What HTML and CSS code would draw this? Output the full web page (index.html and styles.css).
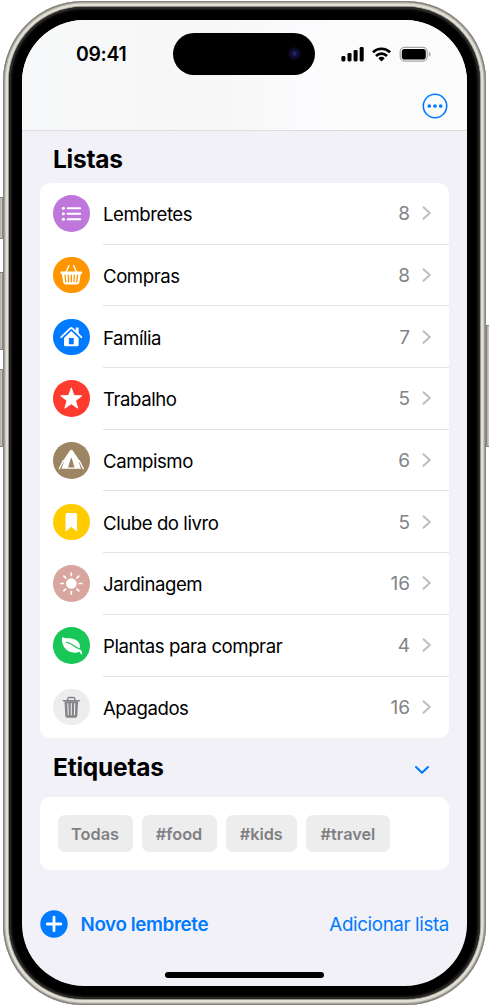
FILE: index.html
```html
<!DOCTYPE html>
<html lang="pt">
<head>
<meta charset="utf-8">
<title>Lembretes</title>
<link rel="stylesheet" href="styles.css">
</head>
<body>
<div class="stage">
  <span class="side-button action"></span>
  <span class="side-button volume-up"></span>
  <span class="side-button volume-down"></span>
  <span class="side-button power"></span>
  <div class="phone">
    <div class="bezel">
      <main class="screen">
        <header class="header">
          <div class="status">
            <span class="time">09:41</span>
            <div class="island"><span class="camera"></span></div>
            <svg class="status-icons" viewBox="0 0 92 18" width="92" height="18">
              <rect x="1.4" y="11" width="4" height="5.4" rx="1.3"/>
              <rect x="7.5" y="8" width="4" height="8.4" rx="1.3"/>
              <rect x="13.6" y="5" width="4" height="11.4" rx="1.3"/>
              <rect x="19.7" y="2" width="4" height="14.4" rx="1.3"/>
              <g fill="none" stroke="#000" stroke-width="2.7">
                <path d="M32.9 7.2a12.4 12.4 0 0 1 17.2 0"/>
                <path d="M36 10.9a8 8 0 0 1 11 0"/>
              </g>
              <path d="M38.3 13.3a4.8 4.8 0 0 1 6.4 0L41.5 16.6z"/>
              <rect x="60.2" y="2.4" width="27" height="13.7" rx="4.3" fill="none" stroke="#a7a7a7" stroke-width="1.2"/>
              <rect x="61.8" y="4" width="24" height="10.6" rx="2.8"/>
              <path d="M88.8 6.8c2.3.7 2.3 4.3 0 5z" fill="#a7a7a7"/>
            </svg>
          </div>
          <svg class="more" viewBox="0 0 26 26" width="26" height="26">
            <circle cx="13" cy="13" r="11.7" fill="none" stroke="#007aff" stroke-width="1.6"/>
            <g fill="#007aff"><circle cx="7.3" cy="13" r="1.85"/><circle cx="13" cy="13" r="1.85"/><circle cx="18.7" cy="13" r="1.85"/></g>
          </svg>
        </header>

        <h2 class="title lists-title">Listas</h2>
        <ul class="lists">
          <li class="row"><svg class="icon purple" viewBox="0 0 36 36"><g fill="#fff"><circle cx="10.2" cy="13" r="1.5"/><circle cx="10.2" cy="18.4" r="1.5"/><circle cx="10.2" cy="23.8" r="1.5"/></g><path d="M14.4 13h12.3M14.4 18.4h12.3M14.4 23.8h12.3" stroke="#fff" stroke-width="2" stroke-linecap="round"/></svg><div class="line"><span class="name">Lembretes</span><span class="count">8</span><svg class="chevron" viewBox="0 0 10 16"><path d="M1.5 2.200l6.300 5.800-6.300 5.800"/></svg></div></li>
          <li class="row"><svg class="icon orange" viewBox="0 0 36 36"><path d="M12.4 16l3.2-7.400M23.6 16l-3.2-7.400" stroke="#fff" stroke-width="1.4" stroke-linecap="round"/><path fill="#fff" d="M8.2 14.200h19.600q1 0 1 1.200t-1 1.200h-.4l-1.500 8.500q-.4 2-2.300 2H12.400q-1.900 0-2.300-2L8.600 16.600h-.4q-1 0-1-1.200t1-1.200z"/><path d="M11.900 17.800l.7 6.600M15 17.800l.3 6.600M18 17.800v6.600M21 17.800l-.3 6.600M24.100 17.800l-.7 6.600" stroke="#ff9500" stroke-width="1.300" stroke-linecap="round"/></svg><div class="line"><span class="name">Compras</span><span class="count">8</span><svg class="chevron" viewBox="0 0 10 16"><path d="M1.5 2.200l6.300 5.800-6.300 5.800"/></svg></div></li>
          <li class="row"><svg class="icon blue" viewBox="0 0 36 36"><path d="M8.1 17.800L17 9.300q1-.9 2 0l8.900 8.500" fill="none" stroke="#fff" stroke-width="1.800" stroke-linecap="round" stroke-linejoin="round"/><path d="M22.400 8.400h2.800v7l-2.800-2.600z" fill="#fff"/><path fill="#fff" fill-rule="evenodd" d="M18 11.700l7.200 6.900v6.700q0 1.500-1.500 1.500H12.300q-1.500 0-1.500-1.500v-6.700zM15.600 18.800v6h4.800v-6z"/></svg><div class="line"><span class="name">Família</span><span class="count">7</span><svg class="chevron" viewBox="0 0 10 16"><path d="M1.5 2.200l6.300 5.800-6.300 5.800"/></svg></div></li>
          <li class="row"><svg class="icon red" viewBox="0 0 36 36"><path d="M18 8l2.600 7.300 7.500.2-6 4.700 2.200 7.400-6.300-4.400-6.300 4.400 2.200-7.400-6-4.700 7.500-.2z" fill="#fff" stroke="#fff" stroke-width="1" stroke-linejoin="round"/></svg><div class="line"><span class="name">Trabalho</span><span class="count">5</span><svg class="chevron" viewBox="0 0 10 16"><path d="M1.5 2.200l6.300 5.800-6.300 5.800"/></svg></div></li>
          <li class="row"><svg class="icon brown" viewBox="0 0 36 36"><path d="M16.800 8.200q1.200-1 2.400 0l6.600 9.800 2 8.400H8.200l2-8.400z" fill="#fff"/><path d="M18 15.800q-.6 0-.7 1l-2.500 8.400h6.400l-2.500-8.400q-.1-1-.7-1z" fill="#9d8563"/><path d="M10.200 19.500L7.900 26.500M25.800 19.500l2.300 7" stroke="#9d8563" stroke-width="1"/><path d="M10.200 18.300l-4 8M25.800 18.300l4 8" stroke="#fff" stroke-width="1.300" stroke-linecap="round"/></svg><div class="line"><span class="name">Campismo</span><span class="count">6</span><svg class="chevron" viewBox="0 0 10 16"><path d="M1.5 2.200l6.300 5.800-6.300 5.800"/></svg></div></li>
          <li class="row"><svg class="icon yellow" viewBox="0 0 36 36"><path d="M12.300 10.700q0-1.800 1.800-1.800h7.800q1.800 0 1.800 1.800v15.500q0 1.300-1 .4L18 22.500l-4.700 4.100q-1 .9-1-.4z" fill="#fff"/></svg><div class="line"><span class="name">Clube do livro</span><span class="count">5</span><svg class="chevron" viewBox="0 0 10 16"><path d="M1.5 2.200l6.300 5.800-6.300 5.800"/></svg></div></li>
          <li class="row"><svg class="icon pink" viewBox="0 0 36 36"><circle cx="18" cy="18.200" r="5.200" fill="#fff"/><path d="M18 7.900v2.400M18 26.100v2.400M7.700 18.200h2.400M25.900 18.200h2.400M10.700 10.900l1.700 1.700M23.600 23.800l1.700 1.700M25.300 10.900l-1.700 1.700M12.400 23.800l-1.700 1.700" stroke="#fff" stroke-width="1.700" stroke-linecap="round"/></svg><div class="line"><span class="name">Jardinagem</span><span class="count">16</span><svg class="chevron" viewBox="0 0 10 16"><path d="M1.5 2.200l6.300 5.800-6.300 5.800"/></svg></div></li>
          <li class="row"><svg class="icon green" viewBox="0 0 36 36"><path fill="#fff" d="M9.700 10.100c2.600 1.400 6.200.5 10.300 1.600 4.700 1.200 7 4.400 6.500 8.900-.2.600.9 1.700 1.500 3 .7 1.600.9 3.300.2 3.400-.8.200-1.100-1.300-2.200-2.700-4.700 1.900-10.300.8-13.500-2.600C9.300 18.300 8.500 12.900 9 10.700q.1-.9.7-.6z"/><path d="M13.300 15.200c4.800.3 7 3.900 10.300 5.200 1.200.5 2.200.7 3.200 1.600" fill="none" stroke="#19c759" stroke-width="1.200" stroke-linecap="round"/></svg><div class="line"><span class="name">Plantas para comprar</span><span class="count">4</span><svg class="chevron" viewBox="0 0 10 16"><path d="M1.5 2.200l6.300 5.800-6.300 5.800"/></svg></div></li>
          <li class="row"><svg class="icon gray" viewBox="0 0 36 36"><path d="M14.500 11.200V9.800q0-1.500 1.500-1.500h4q1.500 0 1.500 1.500v1.400" fill="none" stroke="#858589" stroke-width="1.400"/><path d="M10.100 11.600h15.800" stroke="#858589" stroke-width="1.600" stroke-linecap="round"/><path d="M11.300 12h13.400l-.8 14.300q-.1 1.900-2 1.900h-7.800q-1.900 0-2-1.900z" fill="#858589"/><path d="M14.600 14.400l.4 11M18 14.400v11M21.400 14.400l-.4 11" stroke="#ededed" stroke-width="1.100" stroke-linecap="round"/></svg><div class="line"><span class="name">Apagados</span><span class="count">16</span><svg class="chevron" viewBox="0 0 10 16"><path d="M1.5 2.200l6.300 5.800-6.300 5.800"/></svg></div></li>
        </ul>

        <div class="tags-head">
          <h2 class="title tags-title">Etiquetas</h2>
          <svg class="expand" viewBox="0 0 16 10" width="16" height="10"><path d="M2 2l6 5.800L14 2"/></svg>
        </div>
        <div class="tags">
          <span class="tag t1">Todas</span>
          <span class="tag t2">#food</span>
          <span class="tag t3">#kids</span>
          <span class="tag t4">#travel</span>
        </div>

        <footer class="toolbar">
          <svg class="plus" viewBox="0 0 28 28" width="28" height="28"><circle cx="14" cy="14" r="13.700" fill="#007aff"/><path d="M14 7.200v13.600M7.200 14h13.600" stroke="#fff" stroke-width="2.800" stroke-linecap="round"/></svg>
          <span class="new">Novo lembrete</span>
          <span class="add">Adicionar lista</span>
        </footer>
        <div class="home"></div>
      </main>
    </div>
  </div>
</div>
</body>
</html>
```

FILE: styles.css
```css
* { box-sizing: border-box; }
body { margin: 0; background: #fff; font-family: Inter, "Liberation Sans", sans-serif; color: #000; }
.stage { position: relative; width: 489px; height: 1008px; padding: 1px 3px 3px; overflow: hidden; }

.side-button { position: absolute; width: 4px; border: 1px solid #85837d; background: linear-gradient(90deg, #aaa8a3, #d2d0ca); }
.action { left: -1px; top: 197px; height: 42px; }
.volume-up { left: -1px; top: 272px; height: 78px; }
.volume-down { left: -1px; top: 369px; height: 78px; }
.power { right: -1px; top: 325px; height: 122px; }

.phone {
  position: relative;
  height: 1004px;
  padding: 6px;
  border-radius: 80px;
  background: #c8c5bd;
  box-shadow: inset 0 0 0 1.3px #85837c, inset 0 0 0 2.5px #b3b1aa, inset 0 0 0 5px #e2dfd5, inset 0 0 0 6px #96938b;
}
.bezel {
  height: 992px;
  padding: 13px;
  border-radius: 74px;
  background: #000;
  box-shadow: inset 0 0 0 1px #292927, inset 0 0 3px 1.5px #4b4b49;
}
.screen {
  display: flex;
  flex-direction: column;
  height: 966px;
  border-radius: 62px;
  overflow: hidden;
  background: #f2f1f7;
}

.header {
  flex: none;
  height: 111px;
  border-bottom: 1px solid #dcdcde;
  background: linear-gradient(90deg, #f7f8f9, #f7f7f8 45%, #fbfbfd 62%, #fcfcfd);
}
.status { display: flex; align-items: center; height: 42px; margin-top: 12.5px; padding-left: 54px; }
.time { width: 97px; font-size: 19.4px; font-weight: 560; letter-spacing: -.3px; line-height: 42px; }
.island { display: flex; justify-content: flex-end; align-items: center; width: 142px; height: 42px; padding-right: 14px; border-radius: 21px; background: #000; }
.camera { width: 13px; height: 13px; border-radius: 50%; background: radial-gradient(circle, #222660 0 12%, #0b0d31 35%, #090a1c 60%, #030306); }
.status-icons { margin-left: 25px; }
.more { display: block; margin: 18px 19.5px 0 auto; }

.title { margin: 0; font-size: 24.5px; font-weight: 700; line-height: 30px; }
.lists-title { flex: none; padding: 13px 31px 0; height: 52px; letter-spacing: -.25px; }
.lists { flex: none; height: 555px; margin: 0 18px; padding: 0; border-radius: 10px; background: #fff; list-style: none; }
.row { display: flex; height: 61.7px; padding-left: 13px; }
.icon { flex: none; width: 36.6px; height: 36.6px; margin: 12.2px 13.4px 0 0; border-radius: 50%; }
.purple { background: #bf77db; }
.orange { background: #ff9500; }
.blue { background: #007aff; }
.red { background: #ff3b30; }
.brown { background: #9d8563; }
.yellow { background: #fc0; }
.pink { background: #d9a69f; }
.green { background: #19c759; }
.gray { background: #ededed; }
.line { display: flex; flex: 1; align-items: center; padding-right: 17px; border-bottom: 1px solid #e2e2e4; }
.row:last-child .line { border-bottom-color: transparent; }
.name { flex: 1; white-space: nowrap; font-size: 18.6px; letter-spacing: -.44px; padding-top: 2px; }
.count { color: #838387; font-size: 19px; padding-top: 1px; }
.chevron { width: 10px; height: 16px; margin-left: 12px; fill: none; stroke: #bdbdc1; stroke-width: 2; stroke-linecap: round; stroke-linejoin: round; }

.tags-head { display: flex; flex: none; height: 59px; padding: 14px 37px 0 31px; justify-content: space-between; }
.tags-title { letter-spacing: -.23px; }
.expand { margin-top: 12.5px; fill: none; stroke: #007aff; stroke-width: 2.1; stroke-linecap: round; stroke-linejoin: round; }
.tags { display: flex; flex: none; gap: 9px; height: 73px; margin: 0 18px; padding: 18px 17.5px; border-radius: 10px; background: #fff; }
.tag { height: 37px; border-radius: 7px; background: #ededed; color: #808084; font-size: 16.3px; font-weight: 600; line-height: 38px; text-align: center; }
.t1, .t2 { width: 75px; }
.t3 { width: 71.5px; }
.t4 { width: 84px; }

.toolbar { display: flex; flex: none; align-items: center; height: 28px; margin: 39.5px 18px 0; color: #007aff; white-space: nowrap; }
.plus { margin-left: -.5px; }
.new { margin-left: 13px; padding-top: 1px; font-size: 18.8px; font-weight: 600; letter-spacing: -.38px; }
.add { margin-left: auto; padding-top: 1px; font-size: 18.8px; letter-spacing: -.38px; }
.home { flex: none; width: 159px; height: 6px; margin: 34.5px auto 0; border-radius: 3px; background: #000; }
```
